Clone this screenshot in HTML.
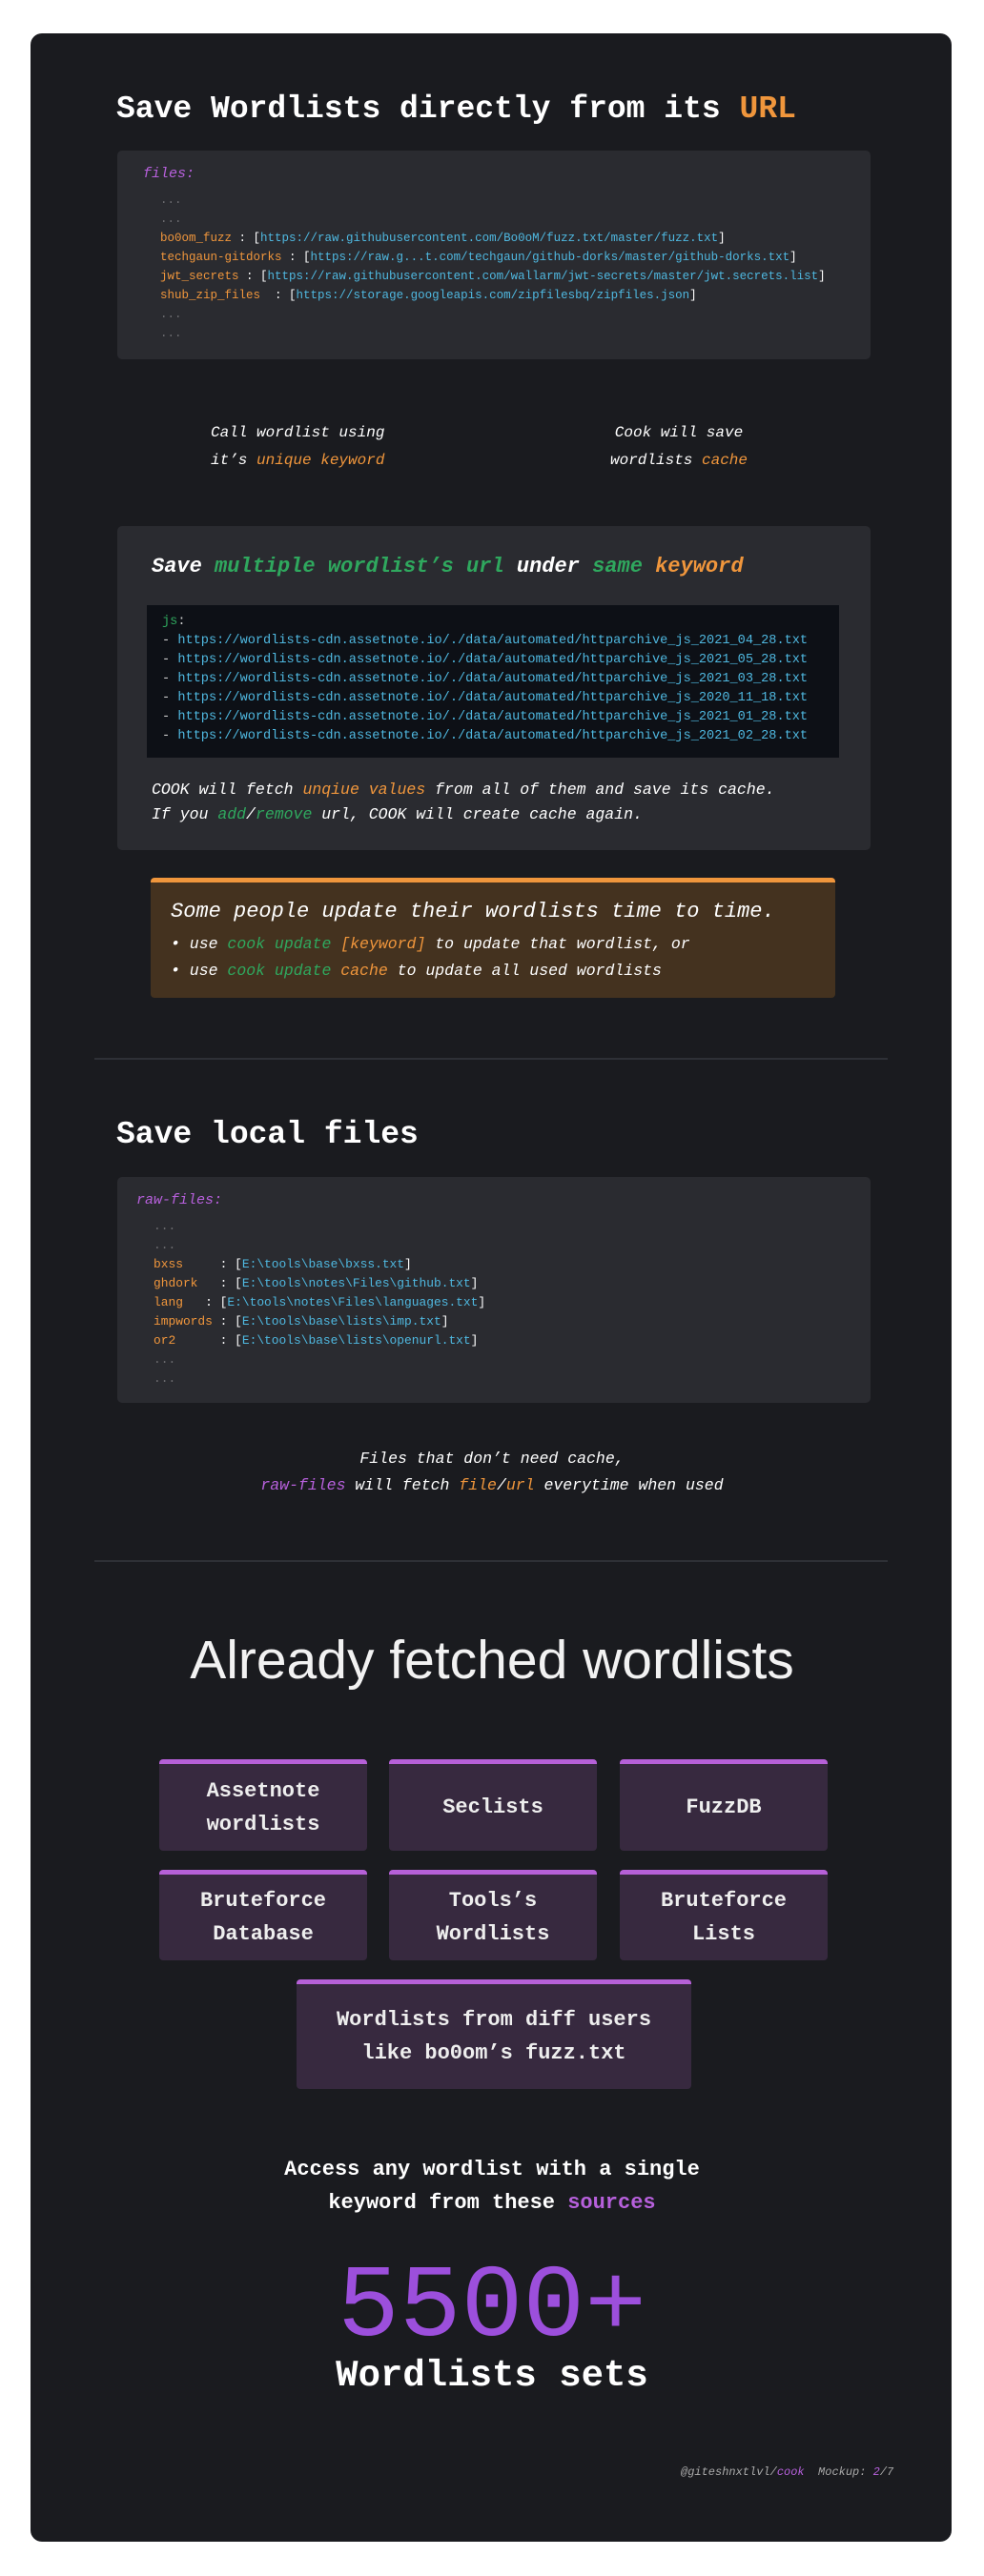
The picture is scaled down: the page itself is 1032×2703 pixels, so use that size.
<!DOCTYPE html>
<html><head><meta charset="utf-8">
<style>
*{margin:0;padding:0;box-sizing:border-box}
body{width:1032px;height:2703px;background:#fff;position:relative;font-family:"Liberation Mono","DejaVu Sans Mono",monospace;color:#fff;overflow:hidden}
.card{position:absolute;left:32px;top:35px;width:966px;height:2632px;background:#1a1b1f;border-radius:12px}
.a{position:absolute;white-space:pre}
.o{color:#f0963c}.b{color:#4fb8e0}.p{color:#b760dc}.g{color:#2fa85e}.d{color:#6c6c70}
.blk{position:absolute;background:#2a2b30;border-radius:5px}
.t{font-weight:bold;font-size:33px;line-height:40px}
.it{font-style:italic}
.box{position:absolute;background:#37293f;border-top:5px solid #b660d8;border-radius:4px;display:flex;align-items:center;justify-content:center;text-align:center;font-weight:bold;font-size:22px;line-height:35px;color:#eee}
</style></head><body>
<div class="card"></div>

<div class="a t" style="left:122px;top:95px">Save Wordlists directly from its <span class="o">URL</span></div>

<div class="blk" style="left:123px;top:158px;width:790px;height:219px"></div>
<div class="a" style="left:150px;top:173px;font-size:15px;line-height:20px"><span class="p it">files:</span></div>
<div class="a" style="left:168px;top:200px;font-size:12.5px;line-height:20px"><span class="d">...</span>
<span class="d">...</span>
<span class="o">bo0om_fuzz</span> : [<span class="b">https://raw.githubusercontent.com/Bo0oM/fuzz.txt/master/fuzz.txt</span>]
<span class="o">techgaun-gitdorks</span> : [<span class="b">https://raw.g...t.com/techgaun/github-dorks/master/github-dorks.txt</span>]
<span class="o">jwt_secrets</span> : [<span class="b">https://raw.githubusercontent.com/wallarm/jwt-secrets/master/jwt.secrets.list</span>]
<span class="o">shub_zip_files</span>  : [<span class="b">https://storage.googleapis.com/zipfilesbq/zipfiles.json</span>]
<span class="d">...</span>
<span class="d">...</span></div>

<div class="a it" style="left:221px;top:440px;font-size:16px;line-height:29px">Call wordlist using
it’s <span class="o">unique keyword</span></div>
<div class="a it" style="left:592px;width:240px;top:440px;font-size:16px;line-height:29px;text-align:center">Cook will save
wordlists <span class="o">cache</span></div>

<div class="blk" style="left:123px;top:552px;width:790px;height:340px"></div>
<div class="a it" style="left:159px;top:579px;font-size:22px;line-height:32px;font-weight:bold">Save <span class="g">multiple wordlist’s url</span> under <span class="g">same</span> <span class="o">keyword</span></div>
<div style="position:absolute;left:154px;top:635px;width:726px;height:160px;background:#0d1016"></div>
<div class="a" style="left:170px;top:643px;font-size:13.6px;line-height:20px;color:#ccc"><span class="g">js</span>:
- <span class="b">https://wordlists-cdn.assetnote.io/./data/automated/httparchive_js_2021_04_28.txt</span>
- <span class="b">https://wordlists-cdn.assetnote.io/./data/automated/httparchive_js_2021_05_28.txt</span>
- <span class="b">https://wordlists-cdn.assetnote.io/./data/automated/httparchive_js_2021_03_28.txt</span>
- <span class="b">https://wordlists-cdn.assetnote.io/./data/automated/httparchive_js_2020_11_18.txt</span>
- <span class="b">https://wordlists-cdn.assetnote.io/./data/automated/httparchive_js_2021_01_28.txt</span>
- <span class="b">https://wordlists-cdn.assetnote.io/./data/automated/httparchive_js_2021_02_28.txt</span></div>
<div class="a it" style="left:159px;top:816px;font-size:16.5px;line-height:26px">COOK will fetch <span class="o">unqiue values</span> from all of them and save its cache.
If you <span class="g">add</span>/<span class="g">remove</span> url, COOK will create cache again.</div>

<div style="position:absolute;left:158px;top:921px;width:718px;height:126px;background:#44321f;border-top:5px solid #f0963c;border-radius:4px"></div>
<div class="a it" style="left:179px;top:942px;font-size:22px;line-height:30px">Some people update their wordlists time to time.</div>
<div class="a it" style="left:179px;top:977px;font-size:16.5px;line-height:28px">• use <span class="g">cook update</span> <span class="o">[keyword]</span> to update that wordlist, or
• use <span class="g">cook update</span> <span class="o">cache</span> to update all used wordlists</div>

<div style="position:absolute;left:99px;top:1110px;width:832px;height:2px;background:#2e3036"></div>

<div class="a t" style="left:122px;top:1171px">Save local files</div>

<div class="blk" style="left:123px;top:1235px;width:790px;height:237px"></div>
<div class="a" style="left:143px;top:1250px;font-size:15px;line-height:20px"><span class="p it">raw-files:</span></div>
<div class="a" style="left:161px;top:1277px;font-size:12.9px;line-height:20px"><span class="d">...</span>
<span class="d">...</span>
<span class="o">bxss</span>     : [<span class="b">E:\tools\base\bxss.txt</span>]
<span class="o">ghdork</span>   : [<span class="b">E:\tools\notes\Files\github.txt</span>]
<span class="o">lang</span>   : [<span class="b">E:\tools\notes\Files\languages.txt</span>]
<span class="o">impwords</span> : [<span class="b">E:\tools\base\lists\imp.txt</span>]
<span class="o">or2</span>      : [<span class="b">E:\tools\base\lists\openurl.txt</span>]
<span class="d">...</span>
<span class="d">...</span></div>

<div class="a it" style="left:0;width:1032px;text-align:center;top:1517px;font-size:16.5px;line-height:28px">Files that don’t need cache,
<span class="p">raw-files</span> will fetch <span class="o">file</span>/<span class="o">url</span> everytime when used</div>

<div style="position:absolute;left:99px;top:1637px;width:832px;height:2px;background:#2e3036"></div>

<div class="a" style="left:0;width:1032px;text-align:center;top:1708px;font-family:'Liberation Sans','DejaVu Sans',sans-serif;font-size:57px;line-height:68px;font-weight:300;color:#f2f2f2">Already fetched wordlists</div>

<div class="box" style="left:167px;top:1846px;width:218px;height:96px">Assetnote<br>wordlists</div>
<div class="box" style="left:408px;top:1846px;width:218px;height:96px">Seclists</div>
<div class="box" style="left:650px;top:1846px;width:218px;height:96px">FuzzDB</div>
<div class="box" style="left:167px;top:1962px;width:218px;height:95px">Bruteforce<br>Database</div>
<div class="box" style="left:408px;top:1962px;width:218px;height:95px">Tools’s<br>Wordlists</div>
<div class="box" style="left:650px;top:1962px;width:218px;height:95px">Bruteforce<br>Lists</div>
<div class="box" style="left:311px;top:2077px;width:414px;height:115px">Wordlists from diff users<br>like bo0om’s fuzz.txt</div>

<div class="a" style="left:0;width:1032px;text-align:center;top:2259px;font-size:22px;line-height:35px;font-weight:bold">Access any wordlist with a single
keyword from these <span class="p">sources</span></div>

<div class="a" style="left:0;width:1032px;text-align:center;top:2362px;font-size:108px;line-height:120px;color:#9c4fdc">5500+</div>
<div class="a" style="left:0;width:1032px;text-align:center;top:2470px;font-size:39px;line-height:46px;font-weight:bold">Wordlists sets</div>

<div class="a it" style="left:714px;top:2586px;font-size:12px;line-height:16px;color:#aaa">@giteshnxtlvl/<span class="p">cook</span>  Mockup: <span class="p">2</span>/7</div>
</body></html>
